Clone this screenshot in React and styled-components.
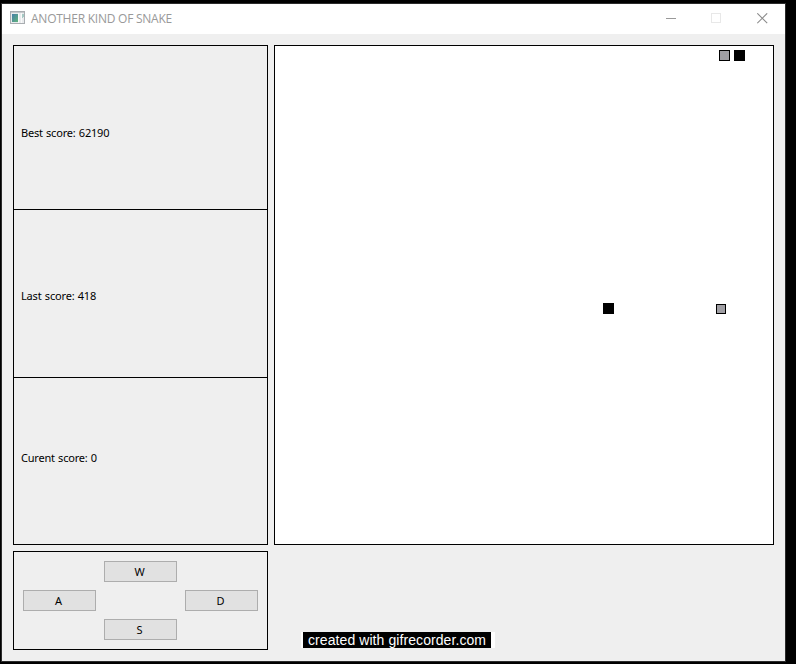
import React from "react";
import styled, { createGlobalStyle } from "styled-components";

const GlobalStyle = createGlobalStyle`
  * { box-sizing: border-box; }
  body { margin: 0; background: #000; overflow: hidden; }
`;

const Desktop = styled.div`
  width: 796px;
  height: 664px;
  padding: 3px 10px 2px 1px;
  background: #000;
`;

const Window = styled.div`
  width: 785px;
  height: 659px;
  border: 1px solid #2b2b2b;
  background: #efefef;
  display: flex;
  flex-direction: column;
`;

const TitleBar = styled.header`
  flex: 0 0 30px;
  display: flex;
  align-items: center;
  padding-left: 8px;
  background: #fff;
`;

const Title = styled.h1`
  flex: 1;
  margin: 0 0 0 5px;
  font: 400 12px/30px "Open Sans", "Noto Sans", sans-serif;
  letter-spacing: ${(p) => p.$spacing};
  color: #999;
  white-space: nowrap;
`;

const AppIcon = styled.svg`
  display: block;
  width: 16px;
  height: 16px;
`;

const CaptionButton = styled.button`
  width: ${(p) => p.$width}px;
  height: 30px;
  padding: 0 0 2px 2px;
  border: 0;
  background: none;
  svg { display: block; margin: 0 auto; }
`;

const Content = styled.main`
  flex: 1;
  display: grid;
  grid-template-columns: 255px 500px;
  grid-template-rows: 500px 99px;
  gap: 6px;
  padding: 11px;
`;

const ScorePanel = styled.section`
  display: grid;
  grid-template-rows: 163px 168px 167px;
  border: 1px solid #000;
`;

const Score = styled.div`
  padding: ${(p) => p.$top}px 0 0 7px;
  border-top: ${(p) => (p.$divided ? "1px solid #000" : "0")};
  font: 400 11px/16px "Noto Sans", sans-serif;
  letter-spacing: ${(p) => p.$spacing}px;
  word-spacing: 0.6px;
  color: #000;
  white-space: nowrap;
`;

const Board = styled.section`
  position: relative;
  border: 1px solid #000;
  background: #fff;
`;

const Cell = styled.div`
  position: absolute;
  left: ${(p) => p.$x}px;
  top: ${(p) => p.$y}px;
  width: ${(p) => p.$size}px;
  height: ${(p) => p.$size}px;
  border: 1px solid #000;
  background: ${(p) => (p.$head ? "#000" : "#a09fa4")};
`;

const Controls = styled.section`
  display: grid;
  grid-template-columns: repeat(3, 73px);
  grid-template-rows: repeat(3, 21px);
  grid-template-areas: ". w ." "a . d" ". s .";
  gap: 8px;
  padding: 9px;
  border: 1px solid #000;
`;

const Key = styled.button`
  grid-area: ${(p) => p.$area};
  padding: 1px 2px 1px 0;
  border: 1px solid #adadad;
  border-radius: 0;
  background: #e1e1e1;
  font: 400 11px/17px "Noto Sans", sans-serif;
  color: #000;
`;

const Footer = styled.div`
  padding: 81px 0 0 27px;
`;

const Watermark = styled.div`
  width: 194px;
  height: 16px;
  padding: 0 4px 0 2px;
  background: #fff;
`;

const WatermarkText = styled.div`
  height: 16px;
  padding-left: 5px;
  background: #000;
  color: #fff;
  font: 400 14px/16px "Liberation Sans", Arial, sans-serif;
  letter-spacing: 0.08px;
  white-space: nowrap;
`;

const cells = [
  { x: 444, y: 4, size: 11 },
  { x: 459, y: 4, size: 11, head: true },
  { x: 328, y: 257, size: 11, head: true },
  { x: 441, y: 258, size: 10 },
];

export default function App() {
  return (
    <Desktop>
      <GlobalStyle />
      <Window>
        <TitleBar>
          <AppIcon viewBox="0 1 16 16" shapeRendering="crispEdges">
            <defs>
              <linearGradient id="screen" x1="0" y1="0" x2="1" y2="1">
                <stop offset="0" stopColor="#467fa8" />
                <stop offset="1" stopColor="#62b37c" />
              </linearGradient>
            </defs>
            <path fill="#a9adb1" d="M0 1h15v13H0z" />
            <path fill="#e9ebed" d="M1 3h13v10H1z" />
            <path fill="#c6c9cc" d="M1 2h13v1H1z" />
            <path fill="url(#screen)" d="M2 4h6v8H2z" />
            <path fill="#fafafa" d="M8 3h1v10H8zM11 3h1v10h-1z" />
            <path fill="#a5c9c4" d="M12 4h2v3h-1v1h-1z" />
          </AppIcon>
          <Title $spacing="-0.24px">ANOTHER KIND OF SNAKE</Title>
          <CaptionButton $width={45} aria-label="Minimize">
            <svg width="11" height="11" shapeRendering="crispEdges">
              <path fill="#999" d="M0 5h10v1H0z" />
            </svg>
          </CaptionButton>
          <CaptionButton $width={45} aria-label="Maximize">
            <svg width="11" height="11" shapeRendering="crispEdges">
              <path fill="none" stroke="#e8e8e8" d="M.5.5h9v9h-9z" />
            </svg>
          </CaptionButton>
          <CaptionButton $width={47} aria-label="Close">
            <svg width="11" height="11">
              <path fill="none" stroke="#8c8c8c" strokeWidth="1.1" d="M.3.3l9.9 9.9M10.2.3L.3 10.2" />
            </svg>
          </CaptionButton>
        </TitleBar>
        <Content>
          <ScorePanel>
            <Score $top={79} $spacing={-0.2}>Best score: 62190</Score>
            <Score $top={78} $spacing={-0.17} $divided>Last score: 418</Score>
            <Score $top={72} $spacing={-0.2} $divided>Curent score: 0</Score>
          </ScorePanel>
          <Board>
            {cells.map((c) => (
              <Cell key={`${c.x}-${c.y}`} $x={c.x} $y={c.y} $size={c.size} $head={c.head} />
            ))}
          </Board>
          <Controls>
            <Key $area="w">W</Key>
            <Key $area="a">A</Key>
            <Key $area="d">D</Key>
            <Key $area="s">S</Key>
          </Controls>
          <Footer>
            <Watermark>
              <WatermarkText>created with gifrecorder.com</WatermarkText>
            </Watermark>
          </Footer>
        </Content>
      </Window>
    </Desktop>
  );
}
